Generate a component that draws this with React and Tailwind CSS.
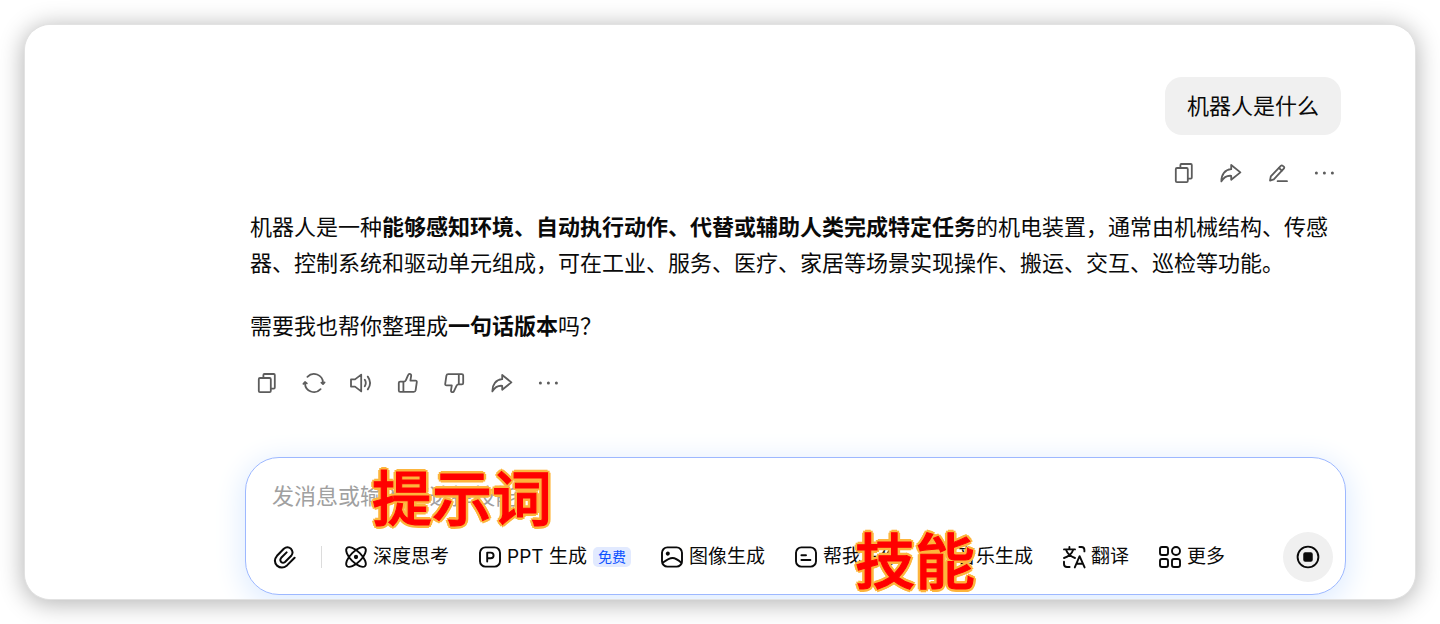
import React, { useState } from 'react';

const Icon = ({ children, size = 24, strokeWidth = 1.8 }) => (
    <svg
        width={size}
        height={size}
        viewBox="0 0 24 24"
        fill="none"
        stroke="currentColor"
        strokeWidth={strokeWidth}
        strokeLinecap="round"
        strokeLinejoin="round"
        aria-hidden="true"
        className="shrink-0"
    >
        {children}
    </svg>
);

const CopyIcon = () => (
    <Icon>
        <rect x="3.8" y="7" width="12" height="14.2" rx="1.2" />
        <path d="M8.4 6.8V4Q8.4 3 9.4 3H18.8Q19.8 3 19.8 4V16.6Q19.8 17.6 18.8 17.6H16" />
    </Icon>
);

const ShareIcon = () => (
    <Icon>
        <path d="M12.2 4L21.4 11.4L12.2 18.8V14.8C7.6 14.4 4.6 16.4 2.4 20.4C2.2 13.4 6 8.6 12.2 8.2Z" />
    </Icon>
);

const EditIcon = () => (
    <Icon>
        <path d="M4 19.6L4.8 15.4L14.8 4.8Q15.8 3.9 16.8 4.8L17.8 5.7Q18.8 6.7 17.8 7.7L7.8 18.4Z" />
        <path d="M13 7L15.8 9.6M11.6 20.2H21" />
    </Icon>
);

const DotsIcon = () => (
    <Icon>
        <g fill="currentColor" stroke="none">
            <circle cx="3.4" cy="12" r="1.5" />
            <circle cx="11.4" cy="12" r="1.5" />
            <circle cx="19.4" cy="12" r="1.5" />
        </g>
    </Icon>
);

const RefreshIcon = () => (
    <Icon>
        <path d="M5.4 5.8A9 9 0 0 1 21 11.6M18.6 18.2A9 9 0 0 1 3 12.4" />
        <path d="M19.4 11.6L21 13L22.6 11.4M1.4 12.8L3 11L4.8 12.4" />
    </Icon>
);

const SpeakerIcon = () => (
    <Icon>
        <path d="M2 8.4H6L12.2 3.6V20.4L6 15.6H2Z" />
        <path d="M15.8 8.8Q17.8 12 15.8 15.2M18.8 5.6Q23.4 12 18.8 18.4" />
    </Icon>
);

const ThumbUpIcon = () => (
    <Icon>
        <path d="M7.4 10.6H4.2Q2.8 10.6 2.8 12V19.4Q2.8 20.8 4.2 20.8H17.8Q19.3 20.8 19.6 19.4L20.8 11.2Q21 9.6 19.4 9.6H14.4L15.2 4.6Q15.2 2.8 13.4 2.8Q12.6 2.8 12.2 3.8L9.8 9.4Q9.2 10.6 8 10.6ZM7.4 10.8V20.6" />
    </Icon>
);

const ThumbDownIcon = () => (
    <Icon>
        <path d="M16 13.4H18.8Q20.2 13.4 20.2 12V4.6Q20.2 3.2 18.8 3.2H5.2Q3.7 3.2 3.4 4.6L2.2 12.8Q2 14.4 3.6 14.4H8.8L8 19.4Q8 21.2 9.8 21.2Q10.6 21.2 11 20.2L13.6 14.6Q14.2 13.4 15.4 13.4ZM15.8 13.2V3.4" />
    </Icon>
);

const ClipIcon = () => (
    <Icon strokeWidth={2}>
        <path d="M22.6 12.8L15 20.4Q10 24.6 5 20.6Q0.8 15.8 5 10.8L11.8 3.8Q15.4 0.8 19 3.8Q22 7.2 19.2 10.8L13 17Q11 18.6 9.2 17Q7.4 15 9.2 12.8L14.6 7.4" />
    </Icon>
);

const AtomIcon = () => (
    <Icon strokeWidth={1.9}>
        <ellipse cx="12" cy="12" rx="12.8" ry="5.4" transform="rotate(45 12 12)" />
        <ellipse cx="12" cy="12" rx="12.8" ry="5.4" transform="rotate(-45 12 12)" />
        <circle cx="12" cy="12" r="1.2" fill="currentColor" />
    </Icon>
);

const SlidesIcon = () => (
    <Icon strokeWidth={1.9}>
        <rect x="2" y="2.4" width="20" height="19.2" rx="5.4" />
        <path d="M9.2 16.6V7.6H12.6Q15.6 7.8 15.6 10.4Q15.6 13 12.6 13.2H9.4" />
    </Icon>
);

const PictureIcon = () => (
    <Icon strokeWidth={1.9}>
        <rect x="2" y="2.4" width="20" height="19.2" rx="5.4" />
        <circle cx="7.8" cy="8.6" r="1.1" fill="currentColor" />
        <path d="M3 17.6Q9 13 12.6 13Q16 13 21.4 17.8" />
    </Icon>
);

const WriteIcon = () => (
    <Icon strokeWidth={1.9}>
        <rect x="2" y="2.4" width="20" height="19.2" rx="5.4" />
        <path d="M7.4 10.2H12M7.4 15H16.4" />
    </Icon>
);

const MusicIcon = () => (
    <Icon strokeWidth={1.9}>
        <circle cx="7" cy="18" r="3.4" />
        <path d="M10.4 18V3L19 6.4" />
    </Icon>
);

const TranslateIcon = () => (
    <Icon strokeWidth={1.9}>
        <path d="M2 4.4H13M7.4 2V4.4M4 4.8Q6 10.6 13 13M11.2 4.8Q9.2 10.8 2 13" />
        <path d="M17.4 2H19.4Q22.4 2 22.4 5V6.4M2 16.8V19Q2 22 5 22H7.6" />
        <path d="M12.8 22.4L17.6 11.2L22.6 22.4M14.4 18.8H21" />
    </Icon>
);

const MoreIcon = () => (
    <Icon strokeWidth={1.9}>
        <rect x="2" y="2" width="8" height="8" rx="2" />
        <circle cx="18" cy="6" r="4" />
        <rect x="2" y="14" width="8" height="8" rx="2" />
        <rect x="14" y="14" width="8" height="8" rx="2" />
    </Icon>
);

const StopIcon = () => (
    <Icon strokeWidth={1.9}>
        <circle cx="12" cy="12" r="10.4" />
        <rect x="8.2" y="8.2" width="7.6" height="7.6" rx="1" fill="currentColor" />
    </Icon>
);

const questionActions = [
    { label: '复制', icon: CopyIcon },
    { label: '分享', icon: ShareIcon },
    { label: '编辑', icon: EditIcon },
    { label: '更多操作', icon: DotsIcon },
];

const answerActions = [
    { label: '复制', icon: CopyIcon },
    { label: '重新生成', icon: RefreshIcon },
    { label: '朗读', icon: SpeakerIcon },
    { label: '喜欢', icon: ThumbUpIcon },
    { label: '不喜欢', icon: ThumbDownIcon },
    { label: '分享', icon: ShareIcon },
    { label: '更多操作', icon: DotsIcon },
];

const skills = [
    { label: '深度思考', icon: AtomIcon },
    { label: 'PPT 生成', icon: SlidesIcon, tag: '免费' },
    { label: '图像生成', icon: PictureIcon },
    { label: '帮我写作', icon: WriteIcon },
    { label: '音乐生成', icon: MusicIcon },
    { label: '翻译', icon: TranslateIcon },
    { label: '更多', icon: MoreIcon },
];

const ActionBar = ({ actions }) => (
    <div className="flex gap-[23px] text-[#5c5c5c]">
        {actions.map(({ label, icon: ActionIcon }) => (
            <button key={label} type="button" aria-label={label}>
                <ActionIcon />
            </button>
        ))}
    </div>
);

// Large outlined label laid over the composer
const Callout = ({ className, children }) => (
    <span
        className={`absolute pointer-events-none whitespace-nowrap text-[60px] leading-[60px] font-medium text-[#ff0000] [-webkit-text-stroke:1px_#ff0000] [text-shadow:3px_0_#fdb53c,-3px_0_#fdb53c,0_3px_#fdb53c,0_-3px_#fdb53c,2px_2px_#fdb53c,-2px_2px_#fdb53c,2px_-2px_#fdb53c,-2px_-2px_#fdb53c] ${className}`}
    >
        {children}
    </span>
);

const Composer = () => {
    const [message, setMessage] = useState('');

    return (
        <form
            onSubmit={(e) => e.preventDefault()}
            className="relative mt-[62px] ml-[220px] mr-[69px] mb-1 px-[26px] pt-[22px] pb-[12px] bg-white border border-[#9db8ff] rounded-[34px] shadow-[0_6px_28px_4px_#e0edff]"
        >
            <input
                type="text"
                aria-label="消息"
                placeholder="发消息或输入“/”选择技能"
                value={message}
                onChange={(e) => setMessage(e.target.value)}
                className="block w-full h-8 text-[22px] bg-transparent text-black placeholder:text-[#a0a0a0] focus:outline-none"
            />

            <div className="mt-5 flex items-center text-[19px] leading-6">
                <button type="button" aria-label="添加附件">
                    <ClipIcon />
                </button>
                <span className="w-px h-[22px] ml-[25px] mr-[22px] bg-[#dcdcdc]" />

                <div className="flex items-center gap-[29px]">
                    {skills.map(({ label, icon: SkillIcon, tag }) => (
                        <button key={label} type="button" className="flex items-center whitespace-nowrap">
                            <SkillIcon />
                            <span className="ml-[5px]">{label}</span>
                            {tag && (
                                <span className="ml-[6px] px-[5px] rounded-[5px] bg-[#e2eaff] text-[14px] leading-[20px] text-[#0b50ff]">
                                    {tag}
                                </span>
                            )}
                        </button>
                    ))}
                </div>

                <button
                    type="button"
                    aria-label="停止生成"
                    className="ml-auto mr-[-14px] w-[50px] h-[50px] flex items-center justify-center shrink-0 rounded-full bg-[#f0f0f0]"
                >
                    <StopIcon />
                </button>
            </div>

            <Callout className="left-[126px] top-[11px]">提示词</Callout>
            <Callout className="left-[609px] top-[74px]">技能</Callout>
        </form>
    );
};

export default function App() {
    return (
        <div className="p-[25px] bg-white text-[#0a0a0a] font-['Inter','Noto_Sans_CJK_SC',sans-serif]">
            <main className="rounded-[25px] shadow-[0_0_0_1px_#e2e2e2,0_3px_24px_2px_#b4b4b4]">
                <div className="rounded-[25px] overflow-hidden bg-white">
                    {/* Question */}
                    <div className="flex flex-col items-end pt-[52px] pr-[74px]">
                        <div className="px-[22px] py-[13px] rounded-[17px] bg-[#f0f0f0] text-[22px] leading-8">
                            机器人是什么
                        </div>
                        <div className="mt-[26px] mr-[4px]">
                            <ActionBar actions={questionActions} />
                        </div>
                    </div>

                    {/* Answer */}
                    <article className="ml-[225px] mr-[82px] mt-[24px] text-[22px] leading-9">
                        <p>
                            机器人是一种<strong>能够感知环境、自动执行动作、代替或辅助人类完成特定任务</strong>
                            的机电装置，通常由机械结构、传感器、控制系统和驱动单元组成，可在工业、服务、医疗、家居等场景实现操作、搬运、交互、巡检等功能。
                        </p>
                        <p className="mt-[27px]">
                            需要我也帮你整理成<strong>一句话版本</strong>吗？
                        </p>
                    </article>
                    <div className="ml-[230px] mt-[27px]">
                        <ActionBar actions={answerActions} />
                    </div>

                    <Composer />
                </div>
            </main>
        </div>
    );
}
